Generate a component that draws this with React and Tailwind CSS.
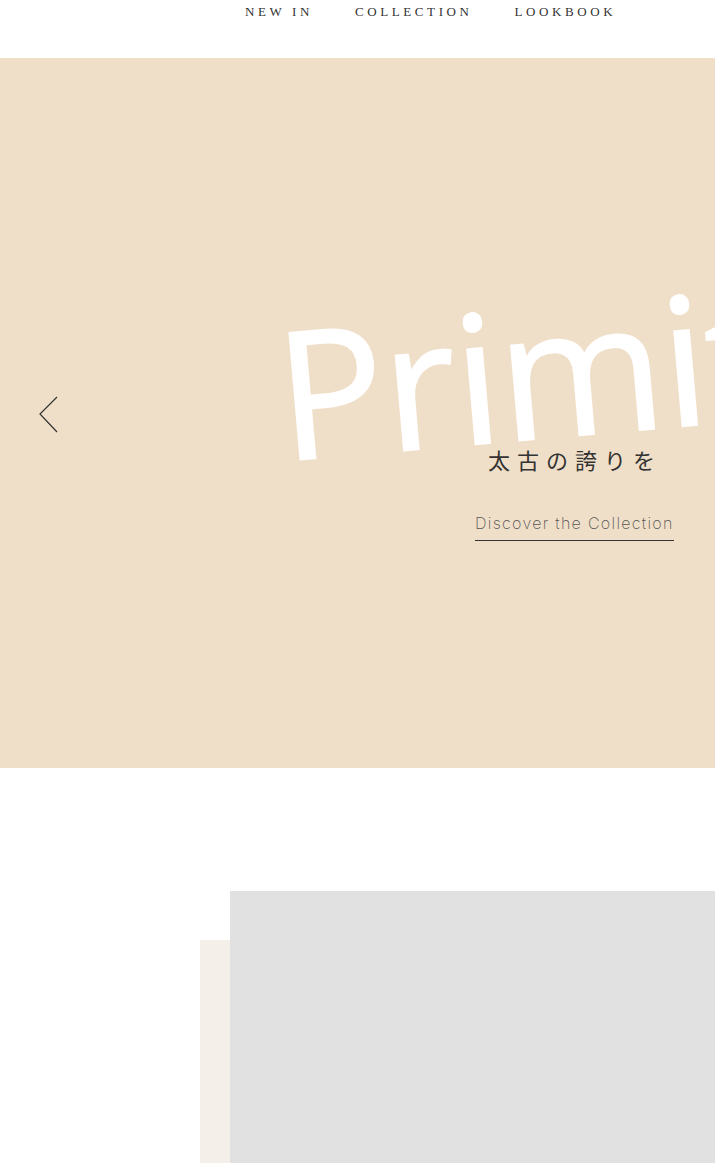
import React from 'react';

const navItems = ['NEW IN', 'COLLECTION', 'LOOKBOOK'];

function Header() {
  return (
    <header className="h-[58px] bg-white">
      <nav className="flex pl-[245px] gap-[42px] pt-[5px]">
        {navItems.map((item) => (
          <a
            key={item}
            href="#"
            className="text-[13px] leading-[14px] tracking-[3.6px] text-[#333] font-['Liberation_Serif',serif]"
          >
            {item}
          </a>
        ))}
      </nav>
    </header>
  );
}

function Hero() {
  return (
    <section className="relative h-[710px] bg-[#f0dfc8] overflow-hidden flex">
      <button className="self-start mt-[338px] ml-[38px] w-[22px] h-[38px] shrink-0" aria-label="previous">
        <svg width="22" height="38" viewBox="0 0 22 38" fill="none">
          <path d="M19 1 L2 18 L19 36" stroke="#333" strokeWidth="1.2" />
        </svg>
      </button>

      <div className="absolute left-[286px] top-[234px] origin-bottom-left -rotate-[5deg] whitespace-nowrap text-white font-['Open_Sans',sans-serif] text-[178px] leading-[200px] tracking-[-1px] [-webkit-text-stroke:2px_white]">
        Primitive
      </div>

      <div className="relative flex flex-col items-start ml-[415px] pt-[386px]">
        <p className="pl-[13px] text-[22px] leading-[30px] tracking-[7px] text-[#333] font-['Noto_Sans_CJK_JP',serif]">
          太古の誇りを
        </p>
        <a
          href="#"
          className="mt-[38px] border-b border-[#333] pb-[6px] text-[16px] leading-[22px] tracking-[1.3px] text-[#555] font-['Inter',sans-serif] font-extralight"
        >
          Discover the Collection
        </a>
      </div>
    </section>
  );
}

function Feature() {
  return (
    <section className="bg-white pt-[123px] h-[395px] overflow-hidden">
      <div className="relative ml-[230px] h-full">
        <div className="absolute left-[-30px] top-[49px] w-[60px] h-[400px] bg-[#f4efe8]" />
        <div className="relative h-full bg-[#e1e1e1]" />
      </div>
    </section>
  );
}

export default function App() {
  return (
    <div className="w-[715px] h-[1163px] overflow-hidden bg-white">
      <Header />
      <Hero />
      <Feature />
    </div>
  );
}
